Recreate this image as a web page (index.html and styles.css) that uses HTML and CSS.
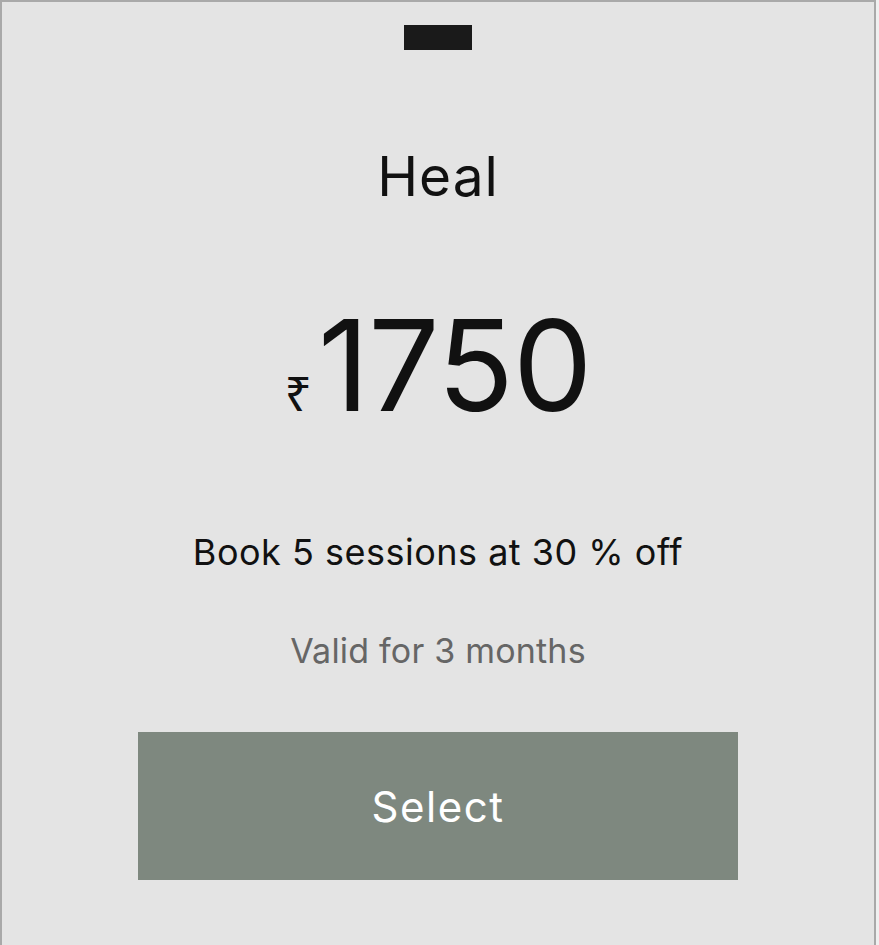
FILE: index.html
```html
<!DOCTYPE html>
<html lang="en">
<head>
<meta charset="utf-8">
<title>Heal</title>
<link rel="stylesheet" href="styles.css">
</head>
<body>
<div class="card">
  <div class="notch"></div>
  <h1 class="title">Heal</h1>
  <div class="price"><span class="currency">₹</span><span class="amount">1750</span></div>
  <p class="offer">Book 5 sessions at 30 % off</p>
  <p class="validity">Valid for 3 months</p>
  <button class="select-btn" type="button">Select</button>
</div>
</body>
</html>
```
FILE: styles.css
```css
html, body {
  margin: 0;
  padding: 0;
  background: #f0f0f0;
}
body {
  font-family: Inter, "Noto Sans", sans-serif;
  color: #111;
}
.card {
  width: 872px;
  min-height: 960px;
  background: #e4e4e4;
  border: 2px solid #a9a9a9;
  border-bottom: none;
  box-sizing: content-box;
  display: flex;
  flex-direction: column;
  align-items: center;
  padding-top: 23px;
}
.notch {
  width: 68px;
  height: 25px;
  background: #1a1a1a;
}
.title {
  margin: 99px 0 0;
  font-size: 55px;
  line-height: 1;
  font-weight: 400;
  letter-spacing: 1px;
  color: #111;
}
.price {
  margin-top: 98px;
  display: flex;
  align-items: baseline;
  line-height: 1;
}
.currency {
  font-family: "Noto Sans", sans-serif;
  font-size: 48px;
  margin-right: 6px;
}
.amount {
  font-size: 126px;
  font-weight: 400;
  letter-spacing: -1px;
}
.offer {
  margin: 106px 0 0;
  font-size: 36px;
  line-height: 1;
  letter-spacing: 0.5px;
  color: #111;
}
.validity {
  margin: 64px 0 0;
  font-size: 34px;
  line-height: 1;
  letter-spacing: 0.2px;
  color: #666;
}
.select-btn {
  margin-top: 64px;
  width: 600px;
  height: 148px;
  border: none;
  background: #7e887f;
  color: #fff;
  font-family: Inter, "Noto Sans", sans-serif;
  font-size: 42px;
  letter-spacing: 1.5px;
  padding: 0;
}
```
